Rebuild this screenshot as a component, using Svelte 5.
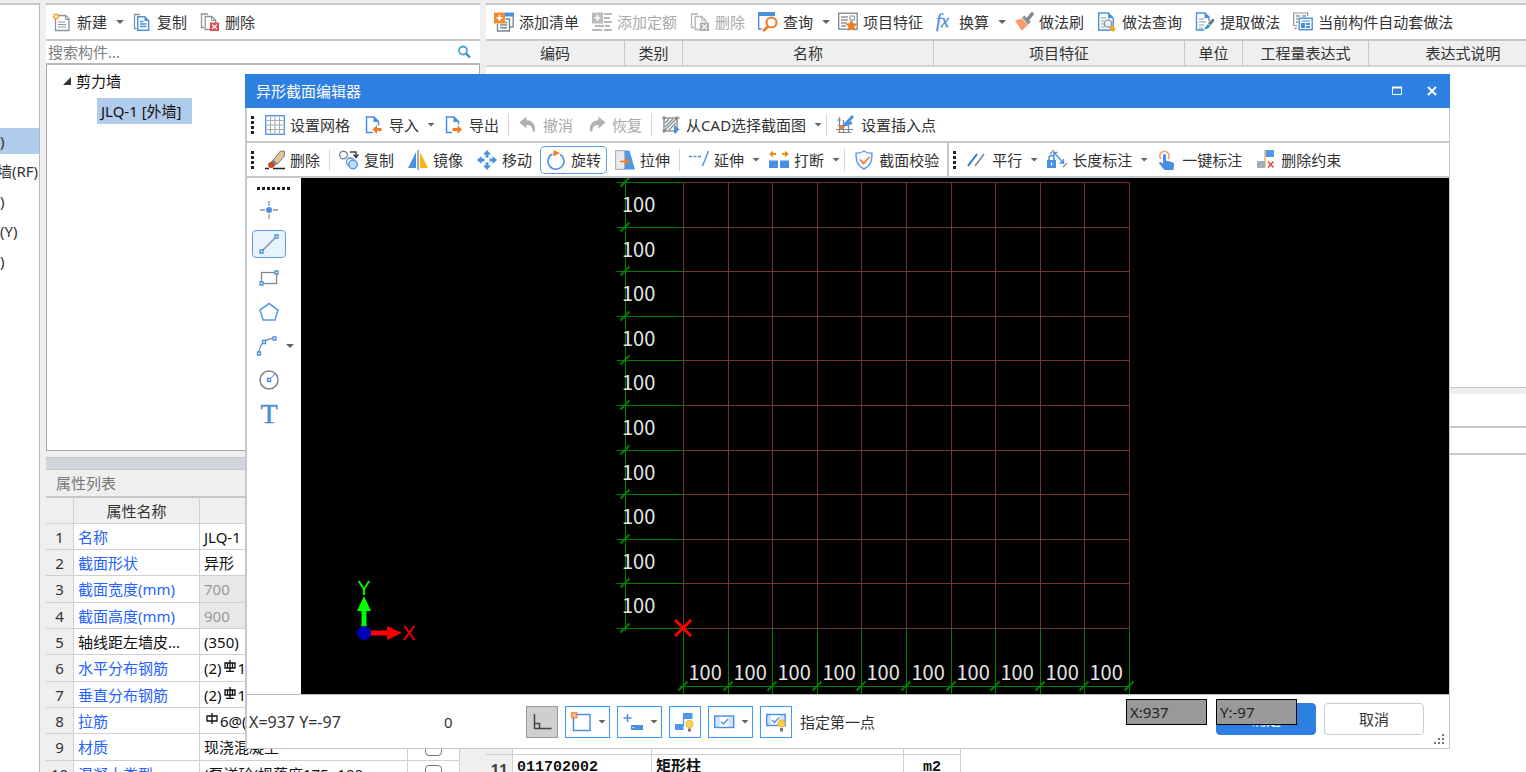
<script lang="ts">
  type Tool = {
    icon: string
    label: string
    drop?: boolean
    disabled?: boolean
    active?: boolean
    sep?: boolean
  }

  const BLUE = '#4a90e2'
  const GRAY = '#8a949c'
  const ORANGE = '#f07d26'

  const icons: Record<string, string> = {
    newFile: `<path d="M5 3.5h8.500l3.500 3.500v11.500h-13.500v-12" fill="#fff" stroke="${GRAY}" stroke-width="1.300"/><path d="M13.500 3.500v4h4M6 10h7M6 12.500h8M6 15h8" fill="none" stroke="${GRAY}"/><path d="M4 1v7M.5 4.500h7M1.500 2l5 5M6.500 2l-5 5" stroke="#f7a736" stroke-width="1.300"/><circle cx="4" cy="4.500" r="1.200" fill="#fff"/>`,
    copyFile: `<path d="M8 2.500h-5.500v14h2" fill="none" stroke="${GRAY}" stroke-width="1.300"/><path d="M5.700 4.700h7l4 4v9.500h-11z" fill="#fff" stroke="${BLUE}" stroke-width="1.400"/><path d="M12.500 4.500v4.500h4.500z" fill="${BLUE}"/><path d="M8 9.500h3.500M8 12h6.500M8 14.500h6.500" stroke="${BLUE}" stroke-width="1.400"/>`,
    deleteFile: `<path d="M8 2h-6.500v13.500h2.500" fill="none" stroke="${GRAY}" stroke-width="1.300"/><path d="M10 17.500h-4.800v-13h6.500l4 4v3" fill="#fff" stroke="${GRAY}" stroke-width="1.300"/><path d="M11.500 4.500v4h4" fill="none" stroke="${GRAY}"/><rect x="10" y="10.500" width="9" height="8.500" fill="#d94f4f"/><path d="M12 12.500l5 4.500M17 12.500l-5 4.500" stroke="#fff" stroke-width="1.100"/>`,
    deleteGray: `<path d="M8 2h-6.500v13.500h2.500" fill="none" stroke="#b5b5b5" stroke-width="1.300"/><path d="M10 17.500h-4.800v-13h6.500l4 4v3" fill="#fff" stroke="#b5b5b5" stroke-width="1.300"/><path d="M11.500 4.500v4h4" fill="none" stroke="#b5b5b5"/><rect x="10" y="10.500" width="9" height="8.500" fill="#b0b0b0"/><path d="M12 12.500l5 4.500M17 12.500l-5 4.500" stroke="#fff" stroke-width="1.100"/>`,
    addList: `<path d="M11 .5h9v4h-9z" fill="${BLUE}"/><path d="M19.200 4v11M3.500 12v7h12v-12h-4M15.500 15h4M6 13h7M6 15.800h7M11 10.500h2" fill="none" stroke="#7c8790" stroke-width="1.400"/><path d="M0 .5h11v11h-11z" fill="#f08b36"/><path d="M5.500 3v6M2.500 6h6" stroke="#fff" stroke-width="1.600"/>`,
    addQuota: `<path d="M0 .5h11v11h-11z" fill="#bcbcbc"/><path d="M5.500 3v6M2.500 6h6" stroke="#fff" stroke-width="1.600"/><path d="M12 2h8M12 6h6M12 10h8M3 14h9M0 18h10M13 14h5M12 18h8" stroke="#b8b8b8" stroke-width="1.800"/>`,
    query: `<path d="M.7 3v14h3" fill="none" stroke="${BLUE}" stroke-width="1.400"/><path d="M0 0h17v4h-17z" fill="${BLUE}"/><circle cx="13.500" cy="10.500" r="5" fill="#fff" stroke="${ORANGE}" stroke-width="2.200"/><path d="M10 14.500l-5 4.500" stroke="${ORANGE}" stroke-width="2.800"/>`,
    feature: `<rect x=".7" y="1.200" width="18.500" height="16" fill="#fff" stroke="#7c8790" stroke-width="1.300"/><path d="M3 5h7M3 8h7M3 11h6M3 14h5" stroke="#8a949c" stroke-width="1.300"/><rect x="12" y="4" width="4.500" height="4" fill="none" stroke="#8a949c"/><path d="M13.500 7.500l1.800 3.800 4.200.5-3 3 .7 4.200-3.700-2-3.800 2 .8-4.200-3-3 4.200-.5z" fill="${ORANGE}"/>`,
    fx: `<text x="0" y="15" font-family="Liberation Serif, serif" font-style="italic" font-size="20" fill="${BLUE}" stroke="${BLUE}" stroke-width=".4">fx</text>`,
    brush: `<path d="M1 8.500l7-2 6 6.500-6 5.500c-2-1-2-3-3.500-4.500z" fill="#f99b6b"/><path d="M8 5.500l2.500-2 6.500 6.500-3 2.500z" fill="${GRAY}"/><path d="M14 7l4-5" stroke="#7c8790" stroke-width="3.600" stroke-linecap="round"/>`,
    methodQuery: `<path d="M1.700 1h9.500l5 5v12h-14.500z" fill="#fff" stroke="${BLUE}" stroke-width="1.400"/><path d="M11 .8v5.500h5.500" fill="${BLUE}"/><path d="M4 6h5M4 9h3M4 12h3M4 15h4" stroke="${GRAY}"/><circle cx="11" cy="11.500" r="3.700" fill="#e8f2fd" stroke="${GRAY}" stroke-width="1.300"/><path d="M13.500 14.500l4 4" stroke="#f5a623" stroke-width="4"/>`,
    extract: `<path d="M9 18h-7.500v-17h8.500l4 4v4" fill="#fff" stroke="${BLUE}" stroke-width="1.400"/><path d="M9.500 1v5h5z" fill="${BLUE}"/><path d="M4 7h5M4 10h7M4 13h5M4 16h4" stroke="${GRAY}"/><path d="M9 17.500c1-3 3-4 4-5.500l2.500 2c-1.500 1.500-2.500 3-6.500 3.500z" fill="#25a5b8"/><path d="M13 11l5-4.500 1.500 2-4 5z" fill="#6d767d"/>`,
    autoMethod: `<path d="M4 13.500h-3.300v-12.500h14v3" fill="#fff" stroke="#8a949c" stroke-width="1.200"/><path d="M3 4h4M9 4h4M3 7h2M3 10h2" stroke="#8a949c" stroke-width="1.500"/><rect x="6.200" y="6.200" width="13" height="11.500" fill="#fff" stroke="${BLUE}" stroke-width="1.400"/><path d="M8.500 9h8.500" stroke="${BLUE}"/><path d="M8 11h4v5h-4zM13 11h4v2h-4zM13 14h4v2h-4z" fill="${BLUE}"/><path d="M1 15.500h3l-1 2.500z" fill="${ORANGE}"/>`,
    grid: `<rect x=".7" y=".7" width="18.600" height="18.600" fill="#fff" stroke="${BLUE}" stroke-width="1.300"/><path d="M5.500 1.500v17M10 1.500v17M14.500 1.500v17M1.500 5.500h17M1.500 10h17M1.500 14.500h17" stroke="#a3adb5" stroke-width="1.100"/>`,
    importFile: `<path d="M9 17.500h-6.500v-15.500h7.500l4.500 4.500v4" fill="#fff" stroke="${BLUE}" stroke-width="1.500"/><path d="M9.500 1.500v5.500h5.500z" fill="${BLUE}"/><path d="M8.500 14.500l4.500-4.500v3h4.500v3h-4.500v3z" fill="${ORANGE}"/>`,
    exportFile: `<path d="M8 17.500h-5.500v-15.500h7.500l4.500 4.500v3" fill="#fff" stroke="${BLUE}" stroke-width="1.500"/><path d="M9.500 1.500v5.500h5.500z" fill="${BLUE}"/><path d="M18 14.500l-4.500-4.500v3h-5v3h5v3z" fill="${ORANGE}"/>`,
    undo: `<path d="M1.500 7.500l7-6v3.800c6 0 9.500 4.700 8.500 11.200h-2.500c.5-4-2-6.800-6-6.800v3.800z" fill="#b0b0b0"/>`,
    redo: `<path d="M18.500 7.500l-7-6v3.800c-6 0-9.500 4.700-8.500 11.200h2.500c-.5-4 2-6.800 6-6.800v3.800z" fill="#b0b0b0"/>`,
    cad: `<rect x="3" y="3" width="13" height="13" fill="none" stroke="#7c8790" stroke-width="1.300"/><path d="M4 8l4-4M4 12l8-8M4 15l11-11M8 15l7-7M1 3h4M3 1v4M14 3h5M16 1v4M1 16h4M3 14v4" stroke="#7c8790" stroke-width="1.100"/><path d="M13 10l6 5-3 .5-1 3.500-2-1z" fill="${BLUE}"/>`,
    insert: `<path d="M3.500 2v16M7.500 5v13M12.500 9v9M0 14.500h17M2 10.500h10M2 17.500h13M1 5h4" stroke="#7c8790" stroke-width="1.200"/><path d="M17 1l-9.500 10M16 8l-6 .5" stroke="${BLUE}" stroke-width="3"/><circle cx="5.500" cy="12.500" r="2.300" fill="${ORANGE}"/>`,
    eraser: `<path d="M0 18.500h4M8 18.500h12" stroke="#222" stroke-width="1.300"/><path d="M15.500 1l4 .3-.3 4.700-6.700 8-4.500-3.500z" fill="#e7c598" stroke="#555" stroke-width=".8"/><path d="M8 9.500l4.500 4-3.500 3-4-3.500z" fill="#7c8790"/><ellipse cx="6.300" cy="15" rx="3.200" ry="2.900" fill="#c94712"/>`,
    copyShape: `<circle cx="4.500" cy="5" r="3.800" fill="none" stroke="#7c8790" stroke-width="1.400"/><path d="M11 2h6v5M14.500 4.500l2.500 3 2.500-3" fill="none" stroke="#444" stroke-width="1.500"/><circle cx="11.500" cy="12" r="4" fill="#fff" stroke="${BLUE}" stroke-width="1.300"/><circle cx="14" cy="14.500" r="4.300" fill="#b9dcf7" stroke="${BLUE}" stroke-width="1.300"/>`,
    mirror: `<path d="M8 2v16h-8z" fill="${BLUE}"/><path d="M10 0v20" stroke="#7c8790" stroke-width="1.400"/><path d="M12 2v16h8z" fill="#fbb117"/>`,
    move: `<path d="M10 0l4 4.500h-2.500v3h-3v-3h-2.500zM10 20l-4-4.500h2.500v-3h3v3h2.500zM0 10l4.500-4v2.500h3v3h-3v2.500zM20 10l-4.500 4v-2.500h-3v-3h3v-2.500z" fill="${BLUE}"/>`,
    rotate: `<path d="M6.500 4a8 8 0 1 0 7.500.3" fill="none" stroke="${BLUE}" stroke-width="1.500"/><path d="M7.500 0v6.500l6.500-3.500z" fill="${ORANGE}"/>`,
    stretch: `<rect x=".6" y=".6" width="9" height="18.800" fill="#e8eaed" stroke="#a3adb5"/><path d="M10 .5h4.500l5.500 19h-10z" fill="#4f97e8"/><path d="M5 11.500h7" stroke="${ORANGE}" stroke-width="1.600"/><path d="M10 7.500l4.500 4-4.500 4z" fill="${ORANGE}"/>`,
    extend: `<path d="M0 6.500h13" stroke="${BLUE}" stroke-width="1.400" stroke-dasharray="3 1.500"/><path d="M19.500 1l-6 15" stroke="${BLUE}" stroke-width="1.400"/>`,
    breakLine: `<path d="M0 10.500h9v7.500h-9zM11 10.500h9v7.500h-9z" fill="${BLUE}"/><path d="M0 4l4-3.500v2.500h3v2h-3v2.500zM20 4l-4-3.500v2.500h-3v2h3v2.500z" fill="#e8921c"/>`,
    verify: `<path d="M10 1c2.500 1.800 5 2.300 8 2.300 0 8-1.500 12.700-8 15.700-6.500-3-8-7.700-8-15.700 3 0 5.500-.5 8-2.300z" fill="#f2f8ff" stroke="#5b9be6" stroke-width="1.400"/><path d="M6 9.500l3.500 4 6-6.500" fill="none" stroke="${ORANGE}" stroke-width="1.800"/>`,
    parallel: `<path d="M1 16l9-12" stroke="#3477c9" stroke-width="2"/><path d="M8 16l9-12" stroke="#7c8790" stroke-width="1.600"/>`,
    length: `<rect x="0" y="10" width="9" height="8" fill="${BLUE}"/><path d="M2 10v-2a2.500 2.500 0 0 1 5 0v2" fill="none" stroke="${BLUE}" stroke-width="1.600"/><path d="M4.500 12.500v3" stroke="#fff" stroke-width="1.300"/><path d="M7.500 3l8.500 9.500M7 6v-3.500h3.500M12.500 13h4v-4" fill="none" stroke="${BLUE}" stroke-width="1.400"/><path d="M3 4l4-4M16 17l4-4" stroke="#7c8790" stroke-width="1.100"/>`,
    oneKey: `<path d="M4 9a4.600 4.600 0 1 1 7 0" fill="none" stroke="#f5a07a" stroke-width="1.800"/><path d="M6 5.500c0-2 3-2 3 0v5l6 1.500c2 .5 2 1.500 2 3l-.5 5h-9l-5.500-6.500c0-1.500 2-2 4 0z" fill="${BLUE}"/>`,
    deleteRule: `<path d="M9.500 0h8.500v7h-8.500z" fill="#4f97e8"/><path d="M9 .5v17" stroke="#f0a25a" stroke-width="1.300"/><path d="M1 11h8v7h-8z" fill="#a7adb5"/><path d="M12 11.500l5.500 6M17.500 11.500l-5.500 6" stroke="#e0442f" stroke-width="1.400"/>`,
    point: `<path d="M10 1v5M10 14v5M1 10h5M14 10h5" stroke="${GRAY}" stroke-width="1.300"/><circle cx="10" cy="10" r="3" fill="${BLUE}"/>`,
    line: `<path d="M2.500 17.500l15-15" stroke="${GRAY}" stroke-width="1.600"/><path d="M1 16h3v3h-3zM16 1h3v3h-3z" fill="#fff" stroke="${BLUE}" stroke-width="1.300"/>`,
    rect: `<rect x="2.500" y="4.500" width="15" height="11" fill="none" stroke="#7c8790" stroke-width="1.300"/><path d="M1 14h3v3h-3zM16 3h3v3h-3z" fill="#fff" stroke="${BLUE}" stroke-width="1.300"/>`,
    polygon: `<path d="M10 1.500l9 6.500-3 10h-12l-3-10z" fill="none" stroke="#5b9be6" stroke-width="1.600"/>`,
    arc: `<path d="M0 17.500c0-9 6-15 15-15" fill="none" stroke="${GRAY}" stroke-width="1.400"/><path d="M-1.500 16h3v3h-3zM3.500 4.500h3v3h-3zM14 1h3v3h-3z" fill="#fff" stroke="${BLUE}" stroke-width="1.300"/>`,
    circle: `<circle cx="10" cy="10" r="9" fill="none" stroke="#7c8790" stroke-width="1.500"/><path d="M10 10l6-6" stroke="${BLUE}"/><path d="M8.500 8.500h3v3h-3z" fill="#fff" stroke="${BLUE}" stroke-width="1.300"/>`,
    text: `<text x="10" y="19" text-anchor="middle" font-family="Liberation Serif, serif" font-size="28" fill="${BLUE}" stroke="${BLUE}" stroke-width=".5">T</text>`,
    ortho: `<path d="M2.500 2v14.500h17M2.500 11.500h5v5" fill="none" stroke="#444" stroke-width="1.500"/>`,
    snapBox: `<rect x="2.500" y="2.500" width="16.500" height="16" fill="none" stroke="${BLUE}" stroke-width="1.500"/><rect x=".8" y=".8" width="5" height="5" fill="#f9c09a" stroke="${ORANGE}" stroke-width="1.200"/>`,
    dynInput: `<path d="M4.500 2v8M.5 6h8" stroke="${BLUE}" stroke-width="1.500"/><rect x="8" y="13" width="12" height="5" fill="${BLUE}"/><path d="M9.500 15.500h1.500" stroke="#fff"/>`,
    snapTip: `<path d="M8 1h9.500v6h-9.500zM0 12h8.500v6h-8.500z" fill="#4f97e8"/><path d="M8.500 6v8" stroke="#4f97e8" stroke-width="1.400"/><circle cx="14.500" cy="12" r="3.600" fill="#fcd052" stroke="#e9b52f"/><path d="M13 16.500h3v3h-3z" fill="#777"/>`,
    checkBox: `<rect x=".7" y="4" width="19" height="11.500" fill="#cfe3fa" stroke="${BLUE}" stroke-width="1.400"/><path d="M6 5h8.500v9.500h-8.500z" fill="#fff"/><path d="M7 9.500l2.500 2.500 4.500-5" fill="none" stroke="${BLUE}" stroke-width="1.300"/>`,
    checkTip: `<rect x=".7" y="2.500" width="18.500" height="11" fill="#cfe3fa" stroke="${BLUE}" stroke-width="1.400"/><path d="M5 3.500h8.500v9h-8.500z" fill="#fff"/><path d="M6 8l2.500 2.500 4.500-5" fill="none" stroke="${BLUE}" stroke-width="1.300"/><circle cx="15.500" cy="11.500" r="3.600" fill="#fcd052" stroke="#e9b52f"/><path d="M14 16h3v3.500h-3z" fill="#777"/>`
  }

  const componentTools: Tool[] = [
    { icon: 'newFile', label: '新建', drop: true },
    { icon: 'copyFile', label: '复制' },
    { icon: 'deleteFile', label: '删除' }
  ]

  const methodTools: Tool[] = [
    { icon: 'addList', label: '添加清单' },
    { icon: 'addQuota', label: '添加定额', disabled: true },
    { icon: 'deleteGray', label: '删除', disabled: true },
    { icon: 'query', label: '查询', drop: true },
    { icon: 'feature', label: '项目特征' },
    { icon: 'fx', label: '换算', drop: true },
    { icon: 'brush', label: '做法刷' },
    { icon: 'methodQuery', label: '做法查询' },
    { icon: 'extract', label: '提取做法' },
    { icon: 'autoMethod', label: '当前构件自动套做法' }
  ]

  const fileTools: Tool[] = [
    { icon: 'grid', label: '设置网格' },
    { icon: 'importFile', label: '导入', drop: true },
    { icon: 'exportFile', label: '导出' },
    { icon: 'undo', label: '撤消', disabled: true, sep: true },
    { icon: 'redo', label: '恢复', disabled: true },
    { icon: 'cad', label: '从CAD选择截面图', drop: true, sep: true },
    { icon: 'insert', label: '设置插入点', sep: true }
  ]

  const editTools: Tool[] = [
    { icon: 'eraser', label: '删除' },
    { icon: 'copyShape', label: '复制', sep: true },
    { icon: 'mirror', label: '镜像' },
    { icon: 'move', label: '移动' },
    { icon: 'rotate', label: '旋转', active: true },
    { icon: 'stretch', label: '拉伸' },
    { icon: 'extend', label: '延伸', drop: true, sep: true },
    { icon: 'breakLine', label: '打断', drop: true },
    { icon: 'verify', label: '截面校验', sep: true }
  ]

  const constraintTools: Tool[] = [
    { icon: 'parallel', label: '平行', drop: true },
    { icon: 'length', label: '长度标注', drop: true },
    { icon: 'oneKey', label: '一键标注' },
    { icon: 'deleteRule', label: '删除约束' }
  ]

  const drawTools = ['point', 'line', 'rect', 'polygon', 'arc', 'circle', 'text']

  const statusTools = [
    { icon: 'ortho', pressed: true },
    { icon: 'snapBox', drop: true },
    { icon: 'dynInput', drop: true },
    { icon: 'snapTip' },
    { icon: 'checkBox', drop: true },
    { icon: 'checkTip' }
  ]

  const floors = [
    { label: ')', selected: true },
    { label: '墙(RF)' },
    { label: ')' },
    { label: '(Y)' },
    { label: ')' }
  ]

  const properties = [
    { name: '名称', value: 'JLQ-1' },
    { name: '截面形状', value: '异形' },
    { name: '截面宽度(mm)', value: '700', readonly: true },
    { name: '截面高度(mm)', value: '900', readonly: true },
    { name: '轴线距左墙皮...', value: '(350)', plain: true },
    { name: '水平分布钢筋', before: '(2)', bar: 'ribbed', value: '1' },
    { name: '垂直分布钢筋', before: '(2)', bar: 'ribbed', value: '1' },
    { name: '拉筋', bar: 'round', value: '6@(' },
    { name: '材质', value: '现浇混凝土' },
    { name: '混凝土类型', value: '(泵送砼(坍落度175~190m...' }
  ]

  // section grid: 10 x 10 cells, 100 mm each
  const GRID = { x: 382.5, y: 4.5, step: 44.6, count: 10 }
  const END_X = GRID.x + GRID.step * GRID.count
  const END_Y = GRID.y + GRID.step * GRID.count
  const DIM_X = 324.5
  const DIM_Y = 508.5
  const marks = Array.from({ length: GRID.count + 1 }, (_, i) => Math.round(i * GRID.step))
  const cells = marks.slice(0, GRID.count)

  let search = ''
  let cursorX = 'X:937'
  let cursorY = 'Y:-97'
  let drawTool = 'line'
</script>

<div class="app">
  <aside class="floors">
    {#each floors as floor}
      <div class="floor" class:selected={floor.selected}>{floor.label}</div>
    {/each}
  </aside>

  <section class="components">
    <div class="toolbar main-bar">
      {#each componentTools as tool}
        <button class="tool" type="button">
          <svg class="icon" viewBox="0 0 20 20">{@html icons[tool.icon]}</svg>
          <span>{tool.label}</span>
          {#if tool.drop}<i class="caret"></i>{/if}
        </button>
      {/each}
    </div>
    <label class="search">
      <input type="text" placeholder="搜索构件..." aria-label="搜索构件" bind:value={search} />
      <svg class="search-icon" viewBox="0 0 14 14">
        <circle cx="6" cy="5.500" r="4" fill="none" stroke="#4aa3d8" stroke-width="1.800" />
        <path d="M9 8.500l4 4" stroke="#3b8fc6" stroke-width="2.400" />
      </svg>
    </label>
    <div class="tree">
      <div class="tree-node">
        <svg class="tree-arrow" viewBox="0 0 8 8"><path d="M8 0v8h-8z" fill="#333" /></svg>
        <span>剪力墙</span>
      </div>
      <div class="tree-leaf">JLQ-1 [外墙]</div>
    </div>
    <div class="dock-strip"></div>
    <h2 class="dock-title">属性列表</h2>
    <table class="props">
      <thead>
        <tr><th class="num"></th><th class="name">属性名称</th><th class="value"></th><th class="extra"></th></tr>
      </thead>
      <tbody>
        {#each properties as prop, i}
          <tr>
            <th class="num">{i + 1}</th>
            <td class="name" class:plain={prop.plain}>{prop.name}</td>
            <td class="value" class:readonly={prop.readonly}>
              {prop.before ?? ''}{#if prop.bar}<svg class="bar" viewBox="0 0 12 12">
                  <path
                    d={prop.bar === 'ribbed' ? 'M6 0v12M2 11.500h8M1 3h10v5h-10zM3.500 3v5M8.500 3v5' : 'M6 0v11M1 3h10v5h-10z'}
                    fill="none"
                    stroke="#111"
                    stroke-width="1.300"
                  />
                </svg>{/if}{prop.value}
            </td>
            <td class="extra"><input type="checkbox" aria-label={prop.name} /></td>
          </tr>
        {/each}
      </tbody>
    </table>
  </section>

  <section class="methods">
    <div class="toolbar main-bar">
      {#each methodTools as tool}
        <button class="tool" type="button" disabled={tool.disabled}>
          <svg class="icon" class:narrow={tool.icon === 'fx'} viewBox="0 0 20 20">{@html icons[tool.icon]}</svg>
          <span>{tool.label}</span>
          {#if tool.drop}<i class="caret"></i>{/if}
        </button>
      {/each}
    </div>
    <div class="method-list">
      <table class="list-head">
        <thead>
          <tr>
            <th class="c-code">编码</th>
            <th class="c-kind">类别</th>
            <th class="c-wide">名称</th>
            <th class="c-wide">项目特征</th>
            <th class="c-kind">单位</th>
            <th class="c-expr">工程量表达式</th>
            <th class="c-note">表达式说明</th>
          </tr>
        </thead>
      </table>
    </div>
    <div class="splitter"></div>
    <div class="query-tabs"></div>
    <div class="query-filter"></div>
    <table class="query">
      <tbody>
        {#each Array(10) as _}
          <tr><th></th><td></td><td></td><td></td></tr>
        {/each}
        <tr class="filled">
          <th>11</th>
          <td>011702002</td>
          <td>矩形柱</td>
          <td class="unit">m2</td>
        </tr>
      </tbody>
    </table>
  </section>

  <div class="dialog" role="dialog" aria-label="异形截面编辑器">
    <header class="title-bar">
      <h1>异形截面编辑器</h1>
      <button type="button" aria-label="最大化">
        <svg viewBox="0 0 12 12"><path d="M1.500 2.500h9v7h-9z" fill="none" stroke="#fff" /><path d="M1 2.500h10" stroke="#fff" stroke-width="2" /></svg>
      </button>
      <button type="button" aria-label="关闭">
        <svg viewBox="0 0 12 12"><path d="M2 2l8 8M10 2l-8 8" stroke="#fff" stroke-width="2" /></svg>
      </button>
    </header>

    <div class="bar-row">
      <div class="toolbar">
        <i class="grip"></i>
        {#each fileTools as tool}
          {#if tool.sep}<i class="sep"></i>{/if}
          <button class="tool" type="button" disabled={tool.disabled}>
            <svg class="icon" viewBox="0 0 20 20">{@html icons[tool.icon]}</svg>
            <span>{tool.label}</span>
            {#if tool.drop}<i class="caret"></i>{/if}
          </button>
        {/each}
      </div>
    </div>
    <div class="bar-row">
      <div class="toolbar docked">
        <i class="grip"></i>
        {#each editTools as tool}
          {#if tool.sep}<i class="sep"></i>{/if}
          <button class="tool" class:active={tool.active} type="button">
            <svg class="icon" viewBox="0 0 20 20">{@html icons[tool.icon]}</svg>
            <span>{tool.label}</span>
            {#if tool.drop}<i class="caret"></i>{/if}
          </button>
        {/each}
      </div>
      <div class="toolbar">
        <i class="grip"></i>
        {#each constraintTools as tool}
          <button class="tool" type="button">
            <svg class="icon" viewBox="0 0 20 20">{@html icons[tool.icon]}</svg>
            <span>{tool.label}</span>
            {#if tool.drop}<i class="caret"></i>{/if}
          </button>
        {/each}
      </div>
    </div>

    <div class="workspace">
      <nav class="draw-tools">
        <i class="grip-h"></i>
        {#each drawTools as name}
          <div class="draw-row">
            <button
              class="draw"
              class:selected={drawTool === name}
              type="button"
              aria-label={name}
              on:click={() => (drawTool = name)}
            >
              <svg class="icon" viewBox="0 0 20 20">{@html icons[name]}</svg>
            </button>
            {#if name === 'arc'}<i class="caret"></i>{/if}
          </div>
        {/each}
      </nav>
      <svg class="canvas">
        <g class="grid-lines">
          {#each marks as m}
            <line x1={GRID.x + m} y1={GRID.y} x2={GRID.x + m} y2={END_Y} />
            <line x1={GRID.x} y1={GRID.y + m} x2={END_X} y2={GRID.y + m} />
          {/each}
        </g>
        <g class="dim-lines">
          <line x1={DIM_X} y1={GRID.y} x2={DIM_X} y2={END_Y + 3} />
          <line x1={GRID.x - 4} y1={DIM_Y} x2={END_X} y2={DIM_Y} />
          {#each marks as m}
            <line x1={DIM_X - 9} y1={GRID.y + m} x2={GRID.x} y2={GRID.y + m} />
            <line x1={GRID.x + m} y1={END_Y} x2={GRID.x + m} y2="517" />
            <line class="tick" x1={DIM_X - 5} y1={GRID.y + m + 4} x2={DIM_X + 4} y2={GRID.y + m - 5} />
            <line class="tick" x1={GRID.x + m - 5} y1={DIM_Y + 4} x2={GRID.x + m + 4} y2={DIM_Y - 5} />
          {/each}
        </g>
        <g class="dim-text">
          {#each cells as c}
            <text x="321" y={c + 34}>100</text>
            <text x={GRID.x + c + 5} y="502">100</text>
          {/each}
        </g>
        <path d="M374 442l16 16M390 442l-16 16" stroke="#f00" stroke-width="3" />
        <path d="M63 454v-28" stroke="#0f0" stroke-width="5" />
        <path d="M56 433l7-15 7 15z" fill="#0f0" />
        <path d="M63 455h24" stroke="#f00" stroke-width="5" />
        <path d="M86 448l15 7-15 7z" fill="#f00" />
        <circle cx="63" cy="455" r="7" fill="#0000b8" />
        <text class="axis" x="63" y="417" fill="#0f0">Y</text>
        <text class="axis" x="108" y="462" fill="#f00">X</text>
      </svg>
    </div>

    <footer class="status">
      <span class="coords">X=937 Y=-97</span>
      <span class="angle">0</span>
      <div class="status-tools">
        {#each statusTools as tool}
          <button class="snap" class:pressed={tool.pressed} type="button" aria-label={tool.icon}>
            <svg class="icon" viewBox="0 0 20 20">{@html icons[tool.icon]}</svg>
            {#if tool.drop}<i class="caret"></i>{/if}
          </button>
        {/each}
      </div>
      <span class="hint">指定第一点</span>
      <div class="actions">
        <button class="ok" type="button">确定</button>
        <button class="cancel" type="button">取消</button>
        <div class="cursor-inputs">
          <input type="text" aria-label="X" bind:value={cursorX} />
          <input type="text" aria-label="Y" bind:value={cursorY} />
        </div>
      </div>
      <svg class="resize" viewBox="0 0 10 10">
        <path d="M8 0h2v2h-2zM4 4h2v2h-2zM8 4h2v2h-2zM0 8h2v2h-2zM4 8h2v2h-2zM8 8h2v2h-2z" fill="#777" />
      </svg>
    </footer>
  </div>
</div>

<style>
  :global(body) {
    margin: 0;
    overflow: hidden;
  }

  .app,
  .app button,
  .app input {
    font-family: 'Noto Sans', 'Noto Sans CJK SC', sans-serif;
    font-size: 15px;
    line-height: 20px;
    color: #333;
  }

  .app,
  .app * {
    box-sizing: border-box;
  }

  .app {
    position: relative;
    display: grid;
    grid-template-columns: 40px 434px minmax(0, 1fr);
    column-gap: 6px;
    height: 100vh;
    padding-top: 3px;
    overflow: hidden;
    background: #efefef;
  }

  button {
    margin: 0;
    cursor: pointer;
  }

  .floors {
    display: flex;
    flex-direction: column;
    gap: 4px;
    padding-top: 123px;
    background: #fff;
    border-top: 2px solid #c3c8cc;
    border-right: 1px solid #b8b8b8;
    overflow: hidden;
  }

  .floor {
    display: flex;
    align-items: center;
    height: 26px;
    white-space: nowrap;
  }

  .floor:nth-child(2) {
    justify-content: flex-end;
    padding-right: 1px;
  }

  .floor.selected {
    background: #b1cbec;
  }

  .components,
  .methods {
    display: flex;
    flex-direction: column;
    min-width: 0;
    overflow: hidden;
  }

  .toolbar {
    display: flex;
    align-items: center;
    gap: 3px;
    background: #fff;
  }

  .main-bar {
    flex: 0 0 38px;
    padding-left: 1px;
    border-top: 2px solid #c3c8cc;
    border-bottom: 2px solid #c3c8cc;
  }

  .methods .main-bar {
    padding-left: 3px;
  }

  .tool {
    display: flex;
    align-items: center;
    height: 26px;
    padding: 0 5px;
    background: none;
    border: 0;
    border-radius: 4px;
    white-space: nowrap;
  }

  .tool:has(.caret) {
    padding-right: 0;
  }

  .tool:disabled span {
    color: #aaa;
  }

  .tool.active {
    box-shadow: 0 0 0 1px #5b9be6;
  }

  .icon {
    flex: none;
    width: 20px;
    height: 20px;
    overflow: visible;
  }

  .tool .icon {
    margin-right: 5px;
  }

  .icon.narrow {
    width: 18px;
  }

  .caret {
    flex: none;
    width: 8px;
    height: 4px;
    background: #666;
    clip-path: polygon(0 0, 100% 0, 50% 100%);
  }

  .tool .caret {
    margin-left: 9px;
  }

  .search {
    display: flex;
    flex: 0 0 24px;
    align-items: center;
    padding: 0 9px 0 2px;
    background: #fff;
    border-bottom: 2px solid #b8b8b8;
  }

  .search input {
    flex: 1;
    min-width: 0;
    height: 20px;
    padding: 0;
    border: 0;
    outline: 0;
  }

  .search input::placeholder {
    color: #808080;
  }

  .search-icon {
    width: 14px;
    height: 14px;
  }

  .tree {
    flex: 0 0 386px;
    padding: 3px 0 0 16px;
    background: #fff;
    border: 1px solid #a8a8a8;
    border-top: 0;
    color: #111;
  }

  .tree-node {
    display: flex;
    align-items: center;
    gap: 5px;
    height: 26px;
  }

  .tree-arrow {
    width: 8px;
    height: 8px;
  }

  .tree-leaf {
    display: flex;
    align-items: center;
    width: max-content;
    min-width: 95px;
    height: 26px;
    margin: 4px 0 0 34px;
    padding: 0 4px;
    background: #b1cbec;
  }

  .dock-strip {
    flex: 0 0 12px;
    margin-top: 6px;
    background: #d3d5dc;
    border-top: 1px solid #c3c8cc;
  }

  .dock-title {
    flex: 0 0 27px;
    margin: 0;
    padding: 3px 10px;
    border-top: 1px solid #c3c8cc;
    border-bottom: 2px solid #c3c8cc;
    color: #777;
    font-size: 15px;
    font-weight: 400;
  }

  .props {
    width: 414px;
    table-layout: fixed;
    border-spacing: 0;
    background: #fff;
  }

  .props th,
  .props td {
    height: 26px;
    padding: 0 4px;
    border-right: 1px solid #d0d0d0;
    border-bottom: 1px solid #d0d0d0;
    font-weight: 400;
    white-space: nowrap;
    overflow: hidden;
  }

  .props tr:nth-child(3n) td {
    height: 27px;
  }

  .props th {
    background: #efefef;
    text-align: center;
  }

  .props .num {
    width: 28px;
    padding: 0;
  }

  .props .name {
    width: 126px;
  }

  .props .value {
    width: 208px;
  }

  .props td.name {
    color: #2563ff;
  }

  .props td.name.plain,
  .props td.value {
    color: #111;
  }

  .props td.value.readonly {
    background: #e8e8e8;
    color: #999;
  }

  .props .extra {
    width: 52px;
    text-align: center;
  }

  .props .extra input {
    appearance: none;
    display: block;
    width: 17px;
    height: 17px;
    margin: 0 auto;
    background: #fff;
    border: 1px solid #777;
    border-radius: 4px;
  }

  .bar {
    width: 12px;
    height: 12px;
    margin: 0 2px;
    vertical-align: 2px;
  }

  .methods {
    background: linear-gradient(#efefef 440px, #fff 440px);
  }

  .method-list {
    flex: 0 0 346px;
    background: #fff;
    overflow: hidden;
  }

  .list-head {
    width: 1072px;
    table-layout: fixed;
    border-spacing: 0;
  }

  .list-head th {
    height: 26px;
    padding: 0;
    background: #efefef;
    border-right: 1px solid #c3c8cc;
    border-bottom: 2px solid #d5d5d5;
    font-weight: 400;
  }

  .c-code {
    width: 139px;
  }

  .c-kind {
    width: 58px;
  }

  .c-wide {
    width: 251px;
  }

  .c-expr {
    width: 126px;
  }

  .c-note {
    width: 189px;
  }

  .splitter {
    flex: 0 0 7px;
    border-top: 1px solid #c3c8cc;
  }

  .query-tabs,
  .query-filter {
    flex: 0 0 34px;
    background: #fff;
    border-bottom: 2px solid #c3c8cc;
  }

  .query-filter {
    flex-basis: 27px;
  }

  .query {
    width: 475px;
    table-layout: fixed;
    border-spacing: 0;
  }

  .query th,
  .query td {
    height: 30px;
    padding: 0 4px;
    border-right: 1px solid #d0d0d0;
    border-bottom: 1px solid #d0d0d0;
    font-family: 'Liberation Mono', 'Noto Sans CJK SC', monospace;
    font-size: 15px;
    font-weight: 700;
    color: #111;
  }

  .query .filled th,
  .query .filled td {
    height: 26px;
  }

  .query th {
    width: 27px;
    background: #efefef;
    font-family: 'Noto Sans', sans-serif;
    color: #444;
  }

  .query td:nth-child(2) {
    width: 139px;
  }

  .query td:nth-child(3) {
    width: 252px;
  }

  .query .unit {
    text-align: center;
  }

  .dialog {
    position: absolute;
    top: 74px;
    right: 76px;
    bottom: 23px;
    left: 245px;
    display: flex;
    flex-direction: column;
    background: #fff;
    border: 2px solid #c3c8d4;
    border-width: 0 1px 1px 2px;
  }

  .title-bar {
    display: flex;
    flex: 0 0 34px;
    align-items: center;
    gap: 11px;
    margin-left: -2px;
    margin-right: -1px;
    padding: 0 6px 0 11px;
    background: #2d7fe2;
  }

  .title-bar h1 {
    flex: 1;
    margin: 0;
    color: #fff;
    font-size: 15px;
    font-weight: 400;
  }

  .title-bar button {
    width: 24px;
    height: 24px;
    padding: 6px;
    background: none;
    border: 0;
  }

  .title-bar svg {
    display: block;
    width: 12px;
    height: 12px;
  }

  .bar-row {
    display: flex;
    flex: 0 0 35px;
    border-bottom: 2px solid #c3c8cc;
  }

  .bar-row .toolbar {
    gap: 4px;
    padding: 0 3px 0 4px;
  }

  .bar-row .toolbar.docked {
    border-right: 2px solid #c3c8cc;
  }

  .bar-row .caret {
    margin-left: 8px;
  }

  .grip {
    width: 3px;
    height: 18px;
    margin-right: 2px;
    background: repeating-linear-gradient(#222 0 3px, #fff 3px 5px);
  }

  .sep {
    width: 1px;
    height: 22px;
    background: #d5d5d5;
  }

  .workspace {
    display: flex;
    flex: 1;
    min-height: 0;
  }

  .draw-tools {
    display: flex;
    flex: 0 0 54px;
    flex-direction: column;
    gap: 6px;
    padding: 9px 0 0 5px;
  }

  .grip-h {
    width: 33px;
    height: 3px;
    margin-left: 5px;
    background: repeating-linear-gradient(90deg, #222 0 3px, #fff 3px 5px);
  }

  .draw-row {
    display: flex;
    align-items: center;
  }

  .draw {
    display: flex;
    align-items: center;
    justify-content: center;
    width: 34px;
    height: 28px;
    padding: 0;
    background: none;
    border: 1px solid transparent;
    border-radius: 4px;
  }

  .draw.selected {
    background: #e8f3fd;
    border-color: #5b9be6;
  }

  .canvas {
    flex: 1;
    min-width: 0;
    height: 100%;
    background: #000;
  }

  .grid-lines {
    stroke: #743333;
    stroke-width: 1;
  }

  .dim-lines {
    stroke: #008000;
    stroke-width: 1;
  }

  .tick {
    stroke-width: 2;
  }

  .dim-text {
    fill: #e6e6e6;
    font-family: 'Noto Sans CJK SC', sans-serif;
    font-size: 20px;
  }

  .axis {
    font-family: 'Liberation Sans', sans-serif;
    font-size: 20px;
    text-anchor: middle;
  }

  .status {
    display: flex;
    flex: 0 0 54px;
    align-items: center;
    padding: 0 5px 0 2px;
    border-top: 1px solid #b8b8b8;
  }

  .coords {
    width: 195px;
    font-size: 16px;
  }

  .angle {
    width: 82px;
  }

  .status-tools {
    display: flex;
    gap: 7px;
  }

  .snap {
    display: flex;
    align-items: center;
    gap: 8px;
    height: 32px;
    padding: 0 5px;
    background: #fff;
    border: 1px solid #3d9bff;
  }

  .snap:has(.caret) {
    gap: 7px;
    padding-right: 3px;
  }

  .snap.pressed {
    background: #cfcfd1;
    border-color: #999;
  }

  .hint {
    flex: 1;
    padding-left: 8px;
  }

  .actions {
    position: relative;
    display: flex;
    gap: 8px;
    margin-bottom: 6px;
  }

  .actions button {
    width: 100px;
    height: 32px;
    padding: 0;
    background: #fff;
    border: 1px solid #ccc;
    border-radius: 4px;
  }

  .actions .ok {
    background: #2d7fe2;
    border-color: #2d7fe2;
    color: #fff;
  }

  .cursor-inputs {
    position: absolute;
    top: -4px;
    left: -90px;
    display: flex;
    gap: 9px;
  }

  .cursor-inputs input {
    width: 81px;
    height: 26px;
    padding: 0 3px;
    background: #999;
    border: 1px solid #000;
    border-radius: 0;
    color: #222;
  }

  .resize {
    width: 10px;
    height: 10px;
    margin: 34px 0 0 10px;
  }
</style>
